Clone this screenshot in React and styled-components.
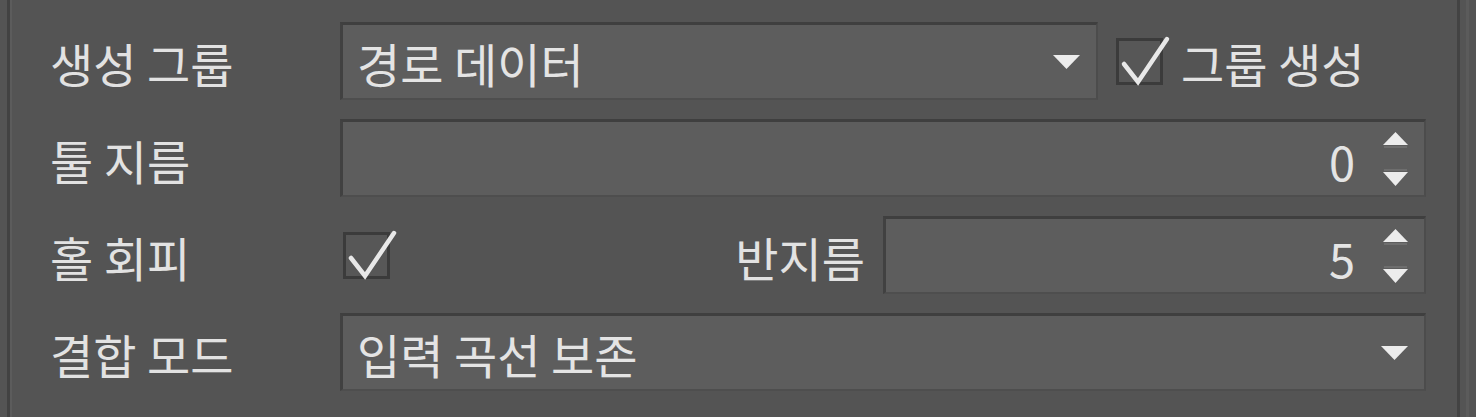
import styled, { createGlobalStyle } from 'styled-components'

const GlobalStyle = createGlobalStyle`
  html, body {
    margin: 0;
    padding: 0;
    background: #545454;
    overflow: hidden;
  }
  body {
    font-family: "Noto Sans CJK KR", "Noto Sans", sans-serif;
  }
`

const Page = styled.div`
  width: 1476px;
  height: 417px;
  padding-left: 7px;
  box-sizing: border-box;
  background: #545454;
`

const Panel = styled.div`
  width: 1453px;
  height: 417px;
  box-sizing: border-box;
  border-left: 3px solid #424242;
  border-right: 3px solid #434343;
  box-shadow: inset 2px 0 0 #5c5c5c, 6px 0 0 #545454, 9px 0 0 #5b5b5b;
  padding: 22px 31px 0 40px;
  display: grid;
  grid-template-columns: 290px 1fr;
  grid-auto-rows: 78px;
  row-gap: 19px;
  align-items: center;
`

const Label = styled.div`
  font-size: 47px;
  color: #e2e2e2;
  line-height: 1;
  padding-top: 3px;
  white-space: nowrap;
`

const Line = styled.div`
  display: flex;
  align-items: center;
  height: 78px;
  gap: ${(p) => p.gap || 0}px;
`

const Field = styled.div`
  box-sizing: border-box;
  height: 78px;
  width: ${(p) => (p.width ? `${p.width}px` : 'auto')};
  flex: ${(p) => (p.width ? 'none' : '1')};
  background: #5d5d5d;
  border-top: 3px solid #3f3f3f;
  border-left: 3px solid #414141;
  border-right: 2px solid #4c4c4c;
  border-bottom: 2px solid #4e4e4e;
  display: flex;
  align-items: center;
  padding: 0 16px 0 14px;
  font-size: 47px;
  color: #e4e4e4;
  line-height: 1;
`

const FieldText = styled.span`
  flex: 1;
  padding-top: 2px;
  white-space: nowrap;
`

const Value = styled.span`
  flex: 1;
  text-align: right;
  padding-top: 3px;
  padding-right: 28px;
`

const Spacer = styled.div`
  flex: 1;
`

const Box = styled.div`
  position: relative;
  width: 47px;
  height: 47px;
  box-sizing: border-box;
  border: 3px solid #3b3b3b;
  background: #575757;
  margin-left: ${(p) => p.offset || 0}px;
  flex: none;
`

const Tick = styled.svg`
  position: absolute;
  left: -3px;
  top: -8px;
  overflow: visible;
`

const CheckBox = ({ offset }) => (
  <Box offset={offset}>
    <Tick width="54" height="54" viewBox="0 0 54 54">
      <path
        d="M8 31 L22 49 L51 6"
        fill="none"
        stroke="#e8e8e8"
        strokeWidth="4.5"
        strokeLinecap="round"
        strokeLinejoin="miter"
      />
    </Tick>
  </Box>
)

const Caret = () => (
  <svg width="27" height="16" viewBox="0 0 27 16">
    <polygon points="0,1 27,1 13.5,15" fill="#ececec" />
  </svg>
)

const Spinner = () => (
  <svg width="25" height="56" viewBox="0 0 25 56" style={{ flex: 'none' }}>
    <polygon points="0,14 12.5,1 25,14" fill="#ececec" />
    <rect x="1" y="15" width="23" height="2" fill="#6e6e6e" />
    <rect x="1" y="38" width="23" height="2" fill="#6e6e6e" />
    <polygon points="0,41 25,41 12.5,55" fill="#ececec" />
  </svg>
)

export default function App() {
  return (
    <>
      <GlobalStyle />
      <Page>
        <Panel>
          <Label>생성 그룹</Label>
          <Line gap={18}>
            <Field width={758}>
              <FieldText>경로 데이터</FieldText>
              <Caret />
            </Field>
            <CheckBox />
            <Label>그룹 생성</Label>
          </Line>

          <Label>툴 지름</Label>
          <Field>
            <Value>0</Value>
            <Spinner />
          </Field>

          <Label>홀 회피</Label>
          <Line gap={18}>
            <CheckBox offset={3} />
            <Spacer />
            <Label>반지름</Label>
            <Field width={543}>
              <Value>5</Value>
              <Spinner />
            </Field>
          </Line>

          <Label>결합 모드</Label>
          <Field>
            <FieldText>입력 곡선 보존</FieldText>
            <Caret />
          </Field>
        </Panel>
      </Page>
    </>
  )
}
